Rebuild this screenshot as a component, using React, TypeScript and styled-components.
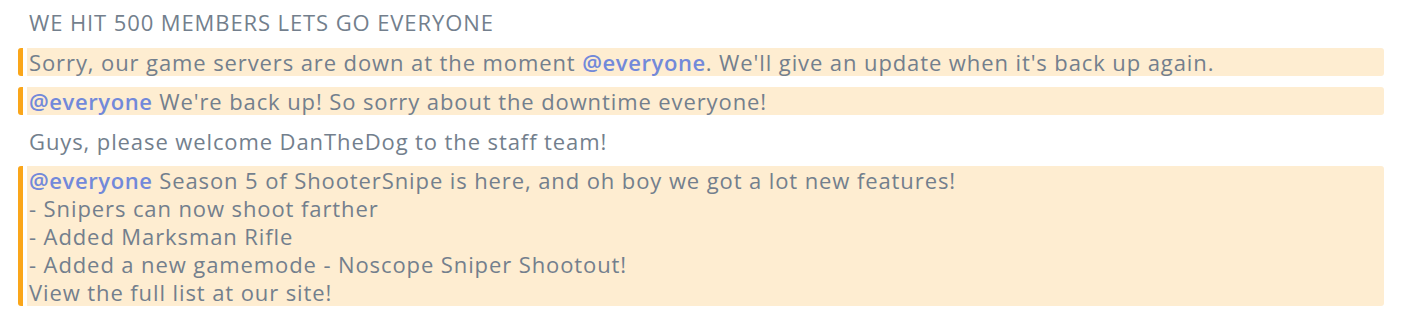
import React from "react";
import styled, { createGlobalStyle } from "styled-components";

const Global = createGlobalStyle`
  html, body { margin: 0; padding: 0; background: #ffffff; }
  body { font-family: "Open Sans", Lato, sans-serif; }
`;

const Feed = styled.div`
  display: flex;
  flex-direction: column;
  gap: 11.5px;
  padding: 8px 18px 0 18px;
  width: 1366px;
`;

const Row = styled.div`
  display: flex;
  align-items: stretch;
  gap: 4px;
`;

const Bar = styled.div<{ $show?: boolean }>`
  width: 5px;
  flex: none;
  border-radius: 3px 0 0 3px;
  background: ${(p) => (p.$show ? "#faa61a" : "transparent")};
`;

const Body = styled.div<{ $mentioned?: boolean }>`
  flex: 1;
  padding-left: 2px;
  border-radius: 0 3px 3px 0;
  background: ${(p) => (p.$mentioned ? "#feedd1" : "transparent")};
  color: #737f8d;
  font-size: 22px;
  letter-spacing: 0.9px;
  line-height: 28px;
  white-space: pre-wrap;
  font-variant-ligatures: none;
`;

const Mention = styled.span`
  color: #7289da;
  font-weight: 600;
  letter-spacing: 0.6px;
`;

const Message: React.FC<{ mentioned?: boolean; children: React.ReactNode }> = ({
  mentioned,
  children,
}) => (
  <Row>
    <Bar $show={mentioned} />
    <Body $mentioned={mentioned}>{children}</Body>
  </Row>
);

export default function App() {
  return (
    <>
      <Global />
      <Feed>
        <Message>WE HIT 500 MEMBERS LETS GO EVERYONE</Message>
        <Message mentioned>
          Sorry, our game servers are down at the moment <Mention>@everyone</Mention>. We'll give an
          update when it's back up again.
        </Message>
        <Message mentioned>
          <Mention>@everyone</Mention> We're back up! So sorry about the downtime everyone!
        </Message>
        <Message>Guys, please welcome DanTheDog to the staff team!</Message>
        <Message mentioned>
          <Mention>@everyone</Mention>
          {" Season 5 of ShooterSnipe is here, and oh boy we got a lot new features!\n- Snipers can now shoot farther\n- Added Marksman Rifle\n- Added a new gamemode - Noscope Sniper Shootout!\nView the full list at our site!"}
        </Message>
      </Feed>
    </>
  );
}
